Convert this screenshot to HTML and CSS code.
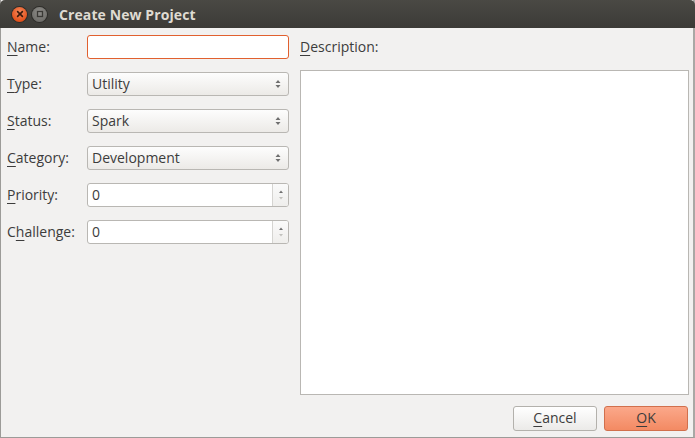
FILE: index.html
```html
<!DOCTYPE html>
<html>
<head>
<meta charset="utf-8">
<link rel="stylesheet" href="styles.css">
</head>
<body>
<div class="window">
  <div class="titlebar">
    <div class="wbtn close">
      <svg width="14" height="14" viewBox="0 0 14 14"><path d="M4.6 4.6 L9.4 9.4 M9.4 4.6 L4.6 9.4" stroke="#3a1a0c" stroke-width="1.6" stroke-linecap="round"/></svg>
    </div>
    <div class="wbtn min">
      <svg width="14" height="14" viewBox="0 0 14 14"><rect x="4.5" y="4.5" width="5" height="5" fill="none" stroke="#3a3935" stroke-width="1.3"/></svg>
    </div>
    <div class="title">Create New Project</div>
  </div>
  <div class="content">
    <div class="main">
      <div class="form">
        <label class="lbl"><u>N</u>ame:</label>
        <div class="entry focused"></div>
        <label class="lbl"><u>T</u>ype:</label>
        <div class="combo"><span>Utility</span><svg class="arr" width="8" height="12" viewBox="0 0 8 12"><path d="M4 2 L6.5 5 H1.5Z M4 10 L6.5 7 H1.5Z" fill="#6f6f6f"/></svg></div>
        <label class="lbl"><u>S</u>tatus:</label>
        <div class="combo"><span>Spark</span><svg class="arr" width="8" height="12" viewBox="0 0 8 12"><path d="M4 2 L6.5 5 H1.5Z M4 10 L6.5 7 H1.5Z" fill="#6f6f6f"/></svg></div>
        <label class="lbl"><u>C</u>ategory:</label>
        <div class="combo"><span>Development</span><svg class="arr" width="8" height="12" viewBox="0 0 8 12"><path d="M4 2 L6.5 5 H1.5Z M4 10 L6.5 7 H1.5Z" fill="#6f6f6f"/></svg></div>
        <label class="lbl"><u>P</u>riority:</label>
        <div class="spin"><span class="val">0</span><div class="spinbtns"><svg width="8" height="14" viewBox="0 0 8 14"><path d="M4 2.5 L6 5 H2Z" fill="#6f6f6f"/><path d="M4 11.5 L6 9 H2Z" fill="#c2c1be"/></svg></div></div>
        <label class="lbl">C<u>h</u>allenge:</label>
        <div class="spin"><span class="val">0</span><div class="spinbtns"><svg width="8" height="14" viewBox="0 0 8 14"><path d="M4 2.5 L6 5 H2Z" fill="#6f6f6f"/><path d="M4 11.5 L6 9 H2Z" fill="#c2c1be"/></svg></div></div>
      </div>
      <div class="desc">
        <label class="dlbl"><u>D</u>escription:</label>
        <div class="textarea"></div>
      </div>
    </div>
    <div class="buttons">
      <button class="btn cancel"><u>C</u>ancel</button>
      <button class="btn ok"><u>O</u>K</button>
    </div>
  </div>
</div>
</body>
</html>
```
FILE: styles.css
```css
* { box-sizing: border-box; }
html, body { margin: 0; padding: 0; background: #f2f1f0; }
body { width: 695px; height: 438px; overflow: hidden; font-family: "Open Sans", "DejaVu Sans", sans-serif; font-size: 14px; color: #3c3c3c; }
u { text-decoration: underline; text-underline-offset: 3px; text-decoration-thickness: 1px; }
.window { width: 695px; height: 438px; display: flex; flex-direction: column; border-left: 1px solid #9c9b98; border-right: 2px solid #a9a8a5; border-bottom: 1px solid #9c9b98; background: #f2f1f0; }
.titlebar { height: 28px; flex: none; display: flex; align-items: center; background: linear-gradient(#4a4944, #3c3b37); border-radius: 5px 5px 0 0; margin: 0 -2px 0 -1px; padding-left: 12px; }
.wbtn { width: 15px; height: 15px; border-radius: 50%; display: flex; align-items: center; justify-content: center; }
.wbtn svg { display: block; }
.close { background: radial-gradient(circle at 50% 35%, #f48a5e, #e4521c 70%, #c8400f); box-shadow: 0 0 0 1px #2e2d2a; }
.min { margin-left: 5px; background: radial-gradient(circle at 50% 35%, #8e8d89, #6e6d69 75%); box-shadow: 0 0 0 1px #2e2d2a; }
.title { margin-left: 12px; color: #dfdbd2; font-weight: bold; font-size: 14px; letter-spacing: 0.1px; }
.content { flex: 1; display: flex; flex-direction: column; padding: 7px 4px 6px 6px; }
.main { flex: 1; display: flex; gap: 11px; }
.form { width: 282px; display: grid; grid-template-columns: 80px 202px; grid-auto-rows: 24px; row-gap: 13px; align-content: start; }
.lbl { display: flex; align-items: center; padding-bottom: 2px; }
.entry { background: #fff; border: 1px solid #b9b7b3; border-radius: 3px; }
.entry.focused { border-color: #e1602f; }
.combo { border: 1px solid #b9b7b3; border-radius: 3px; background: linear-gradient(#fdfdfd, #eceae7); display: flex; align-items: center; justify-content: space-between; padding: 0 6px 0 4px; }
.combo span { padding-bottom: 2px; }
.arr { display: block; }
.spin { border: 1px solid #b9b7b3; border-radius: 3px; background: #fff; display: flex; align-items: center; }
.spin .val { flex: 1; padding-left: 4px; padding-bottom: 2px; }
.spinbtns { width: 16px; align-self: stretch; border-left: 1px solid #d5d4d1; display: flex; align-items: center; justify-content: center; background: linear-gradient(#fafafa, #efeeec); border-radius: 0 2px 2px 0; }
.desc { flex: 1; display: flex; flex-direction: column; padding-right: 0; }
.dlbl { height: 24px; display: flex; align-items: center; flex: none; padding-bottom: 2px; }
.textarea { margin-top: 11px; flex: 1; background: #fff; border: 1px solid #b9b7b3; }
.buttons { flex: none; display: flex; justify-content: flex-end; gap: 7px; margin-top: 11px; padding-right: 1px; }
.btn { width: 84px; height: 25px; font: inherit; color: #3c3c3c; border-radius: 3px; padding: 0 0 2px; }
.cancel { border: 1px solid #b3b1ac; background: linear-gradient(#ffffff, #ebeae8); }
.ok { border: 1px solid #d1704d; background: linear-gradient(#fba88a, #f38a63); }
```
